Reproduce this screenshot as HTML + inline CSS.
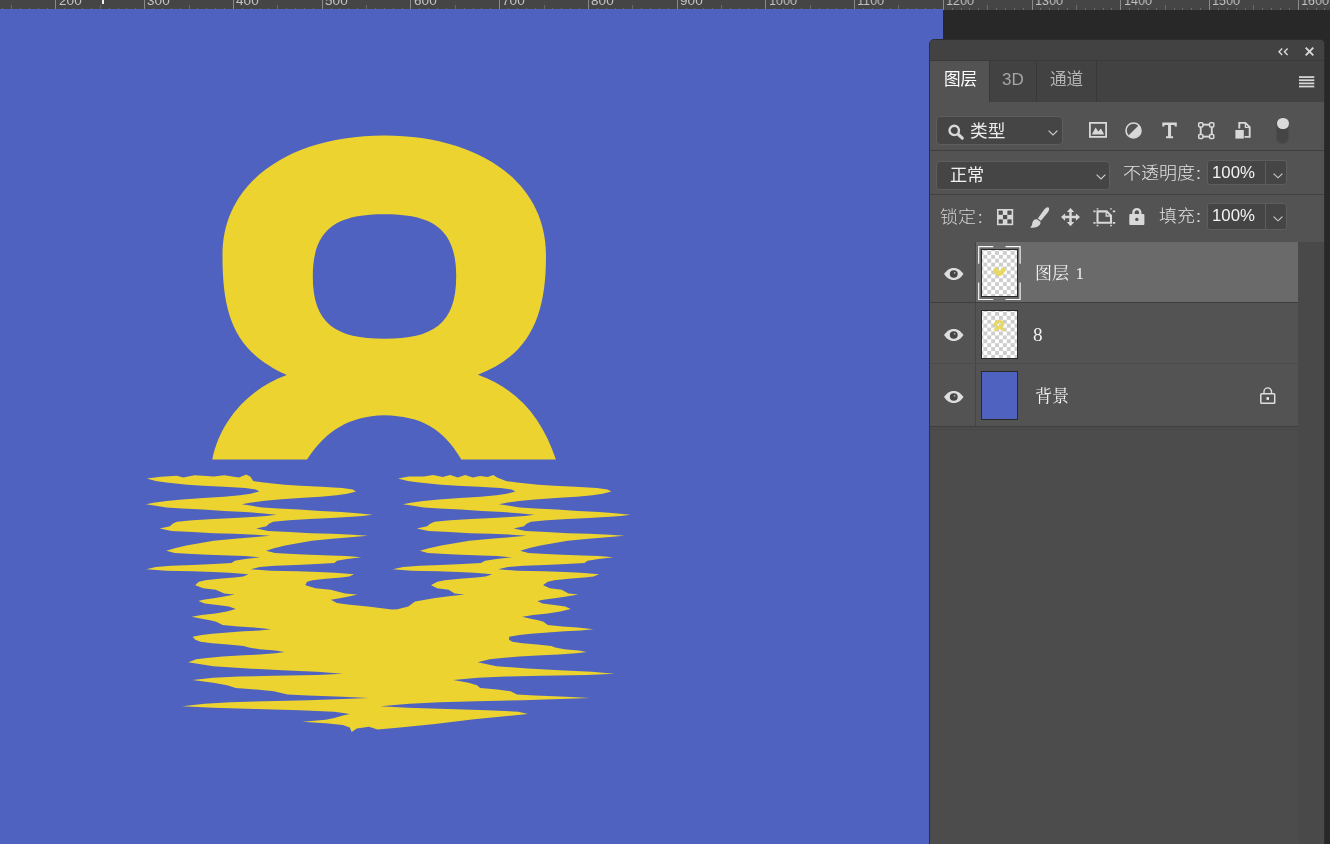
<!DOCTYPE html>
<html lang="zh-CN"><head><meta charset="utf-8"><title>Photoshop</title>
<style>
*{box-sizing:border-box;margin:0;padding:0}
html,body{width:1330px;height:844px;overflow:hidden;background:#282828;font-family:"Liberation Sans","Noto Sans CJK SC",sans-serif;}
#root{position:relative;width:1330px;height:844px;overflow:hidden;background:#282828}
.abs{position:absolute}
#canvas{left:0;top:9.1px;width:943px;height:835px;background:#4f62c0}
#ruler{left:0;top:0;width:1330px;height:9.8px;background:#454545;overflow:hidden}
#ruler span{will-change:transform;position:absolute;top:-5.9px;font-size:13.5px;line-height:14px;color:#c2c2c2;letter-spacing:0.1px}
#ruler i{position:absolute;display:block;width:1px;background:#8a8a8a}
#panel{left:929px;top:39px;width:395.5px;height:810px;background:#535353;border:1px solid #2e2e2e;border-radius:5px 5px 0 0;overflow:hidden}
.t{position:absolute;white-space:nowrap;line-height:1;will-change:transform;transform-origin:0 50%}
</style></head>
<body><div id="root">
<div id="ruler" class="abs"><i style="left:-33.3px;top:0;height:10px"></i><i style="left:-24.5px;top:8.0px;height:1.8px;background:#6a6a6a"></i><i style="left:-15.6px;top:8.0px;height:1.8px;background:#6a6a6a"></i><i style="left:-6.7px;top:8.0px;height:1.8px;background:#6a6a6a"></i><i style="left:2.2px;top:8.0px;height:1.8px;background:#6a6a6a"></i><i style="left:11.0px;top:5.2px;height:4.6px;background:#6a6a6a"></i><i style="left:19.9px;top:8.0px;height:1.8px;background:#6a6a6a"></i><i style="left:28.8px;top:8.0px;height:1.8px;background:#6a6a6a"></i><i style="left:37.7px;top:8.0px;height:1.8px;background:#6a6a6a"></i><i style="left:46.5px;top:8.0px;height:1.8px;background:#6a6a6a"></i><i style="left:55.4px;top:0;height:10px"></i><span style="left:58.6px;">200</span><i style="left:64.3px;top:8.0px;height:1.8px;background:#6a6a6a"></i><i style="left:73.1px;top:8.0px;height:1.8px;background:#6a6a6a"></i><i style="left:82.0px;top:8.0px;height:1.8px;background:#6a6a6a"></i><i style="left:90.9px;top:8.0px;height:1.8px;background:#6a6a6a"></i><i style="left:99.8px;top:5.2px;height:4.6px;background:#6a6a6a"></i><i style="left:108.6px;top:8.0px;height:1.8px;background:#6a6a6a"></i><i style="left:117.5px;top:8.0px;height:1.8px;background:#6a6a6a"></i><i style="left:126.4px;top:8.0px;height:1.8px;background:#6a6a6a"></i><i style="left:135.3px;top:8.0px;height:1.8px;background:#6a6a6a"></i><i style="left:144.1px;top:0;height:10px"></i><span style="left:147.3px;">300</span><i style="left:153.0px;top:8.0px;height:1.8px;background:#6a6a6a"></i><i style="left:161.9px;top:8.0px;height:1.8px;background:#6a6a6a"></i><i style="left:170.8px;top:8.0px;height:1.8px;background:#6a6a6a"></i><i style="left:179.6px;top:8.0px;height:1.8px;background:#6a6a6a"></i><i style="left:188.5px;top:5.2px;height:4.6px;background:#6a6a6a"></i><i style="left:197.4px;top:8.0px;height:1.8px;background:#6a6a6a"></i><i style="left:206.3px;top:8.0px;height:1.8px;background:#6a6a6a"></i><i style="left:215.1px;top:8.0px;height:1.8px;background:#6a6a6a"></i><i style="left:224.0px;top:8.0px;height:1.8px;background:#6a6a6a"></i><i style="left:232.9px;top:0;height:10px"></i><span style="left:236.1px;">400</span><i style="left:241.8px;top:8.0px;height:1.8px;background:#6a6a6a"></i><i style="left:250.6px;top:8.0px;height:1.8px;background:#6a6a6a"></i><i style="left:259.5px;top:8.0px;height:1.8px;background:#6a6a6a"></i><i style="left:268.4px;top:8.0px;height:1.8px;background:#6a6a6a"></i><i style="left:277.2px;top:5.2px;height:4.6px;background:#6a6a6a"></i><i style="left:286.1px;top:8.0px;height:1.8px;background:#6a6a6a"></i><i style="left:295.0px;top:8.0px;height:1.8px;background:#6a6a6a"></i><i style="left:303.9px;top:8.0px;height:1.8px;background:#6a6a6a"></i><i style="left:312.7px;top:8.0px;height:1.8px;background:#6a6a6a"></i><i style="left:321.6px;top:0;height:10px"></i><span style="left:324.8px;">500</span><i style="left:330.5px;top:8.0px;height:1.8px;background:#6a6a6a"></i><i style="left:339.4px;top:8.0px;height:1.8px;background:#6a6a6a"></i><i style="left:348.2px;top:8.0px;height:1.8px;background:#6a6a6a"></i><i style="left:357.1px;top:8.0px;height:1.8px;background:#6a6a6a"></i><i style="left:366.0px;top:5.2px;height:4.6px;background:#6a6a6a"></i><i style="left:374.9px;top:8.0px;height:1.8px;background:#6a6a6a"></i><i style="left:383.7px;top:8.0px;height:1.8px;background:#6a6a6a"></i><i style="left:392.6px;top:8.0px;height:1.8px;background:#6a6a6a"></i><i style="left:401.5px;top:8.0px;height:1.8px;background:#6a6a6a"></i><i style="left:410.4px;top:0;height:10px"></i><span style="left:413.6px;">600</span><i style="left:419.2px;top:8.0px;height:1.8px;background:#6a6a6a"></i><i style="left:428.1px;top:8.0px;height:1.8px;background:#6a6a6a"></i><i style="left:437.0px;top:8.0px;height:1.8px;background:#6a6a6a"></i><i style="left:445.9px;top:8.0px;height:1.8px;background:#6a6a6a"></i><i style="left:454.7px;top:5.2px;height:4.6px;background:#6a6a6a"></i><i style="left:463.6px;top:8.0px;height:1.8px;background:#6a6a6a"></i><i style="left:472.5px;top:8.0px;height:1.8px;background:#6a6a6a"></i><i style="left:481.4px;top:8.0px;height:1.8px;background:#6a6a6a"></i><i style="left:490.2px;top:8.0px;height:1.8px;background:#6a6a6a"></i><i style="left:499.1px;top:0;height:10px"></i><span style="left:502.3px;">700</span><i style="left:508.0px;top:8.0px;height:1.8px;background:#6a6a6a"></i><i style="left:516.8px;top:8.0px;height:1.8px;background:#6a6a6a"></i><i style="left:525.7px;top:8.0px;height:1.8px;background:#6a6a6a"></i><i style="left:534.6px;top:8.0px;height:1.8px;background:#6a6a6a"></i><i style="left:543.5px;top:5.2px;height:4.6px;background:#6a6a6a"></i><i style="left:552.3px;top:8.0px;height:1.8px;background:#6a6a6a"></i><i style="left:561.2px;top:8.0px;height:1.8px;background:#6a6a6a"></i><i style="left:570.1px;top:8.0px;height:1.8px;background:#6a6a6a"></i><i style="left:579.0px;top:8.0px;height:1.8px;background:#6a6a6a"></i><i style="left:587.8px;top:0;height:10px"></i><span style="left:591.0px;">800</span><i style="left:596.7px;top:8.0px;height:1.8px;background:#6a6a6a"></i><i style="left:605.6px;top:8.0px;height:1.8px;background:#6a6a6a"></i><i style="left:614.5px;top:8.0px;height:1.8px;background:#6a6a6a"></i><i style="left:623.3px;top:8.0px;height:1.8px;background:#6a6a6a"></i><i style="left:632.2px;top:5.2px;height:4.6px;background:#6a6a6a"></i><i style="left:641.1px;top:8.0px;height:1.8px;background:#6a6a6a"></i><i style="left:650.0px;top:8.0px;height:1.8px;background:#6a6a6a"></i><i style="left:658.8px;top:8.0px;height:1.8px;background:#6a6a6a"></i><i style="left:667.7px;top:8.0px;height:1.8px;background:#6a6a6a"></i><i style="left:676.6px;top:0;height:10px"></i><span style="left:679.8px;">900</span><i style="left:685.5px;top:8.0px;height:1.8px;background:#6a6a6a"></i><i style="left:694.3px;top:8.0px;height:1.8px;background:#6a6a6a"></i><i style="left:703.2px;top:8.0px;height:1.8px;background:#6a6a6a"></i><i style="left:712.1px;top:8.0px;height:1.8px;background:#6a6a6a"></i><i style="left:720.9px;top:5.2px;height:4.6px;background:#6a6a6a"></i><i style="left:729.8px;top:8.0px;height:1.8px;background:#6a6a6a"></i><i style="left:738.7px;top:8.0px;height:1.8px;background:#6a6a6a"></i><i style="left:747.6px;top:8.0px;height:1.8px;background:#6a6a6a"></i><i style="left:756.4px;top:8.0px;height:1.8px;background:#6a6a6a"></i><i style="left:765.3px;top:0;height:10px"></i><span style="left:768.5px;transform:scaleX(0.925);transform-origin:0 50%;">1000</span><i style="left:774.2px;top:8.0px;height:1.8px;background:#6a6a6a"></i><i style="left:783.1px;top:8.0px;height:1.8px;background:#6a6a6a"></i><i style="left:791.9px;top:8.0px;height:1.8px;background:#6a6a6a"></i><i style="left:800.8px;top:8.0px;height:1.8px;background:#6a6a6a"></i><i style="left:809.7px;top:5.2px;height:4.6px;background:#6a6a6a"></i><i style="left:818.6px;top:8.0px;height:1.8px;background:#6a6a6a"></i><i style="left:827.4px;top:8.0px;height:1.8px;background:#6a6a6a"></i><i style="left:836.3px;top:8.0px;height:1.8px;background:#6a6a6a"></i><i style="left:845.2px;top:8.0px;height:1.8px;background:#6a6a6a"></i><i style="left:854.1px;top:0;height:10px"></i><span style="left:857.3px;transform:scaleX(0.925);transform-origin:0 50%;">1100</span><i style="left:862.9px;top:8.0px;height:1.8px;background:#6a6a6a"></i><i style="left:871.8px;top:8.0px;height:1.8px;background:#6a6a6a"></i><i style="left:880.7px;top:8.0px;height:1.8px;background:#6a6a6a"></i><i style="left:889.6px;top:8.0px;height:1.8px;background:#6a6a6a"></i><i style="left:898.4px;top:5.2px;height:4.6px;background:#6a6a6a"></i><i style="left:907.3px;top:8.0px;height:1.8px;background:#6a6a6a"></i><i style="left:916.2px;top:8.0px;height:1.8px;background:#6a6a6a"></i><i style="left:925.1px;top:8.0px;height:1.8px;background:#6a6a6a"></i><i style="left:933.9px;top:8.0px;height:1.8px;background:#6a6a6a"></i><i style="left:942.8px;top:0;height:10px"></i><span style="left:946.0px;transform:scaleX(0.925);transform-origin:0 50%;">1200</span><i style="left:951.7px;top:8.0px;height:1.8px;background:#6a6a6a"></i><i style="left:960.5px;top:8.0px;height:1.8px;background:#6a6a6a"></i><i style="left:969.4px;top:8.0px;height:1.8px;background:#6a6a6a"></i><i style="left:978.3px;top:8.0px;height:1.8px;background:#6a6a6a"></i><i style="left:987.2px;top:5.2px;height:4.6px;background:#6a6a6a"></i><i style="left:996.0px;top:8.0px;height:1.8px;background:#6a6a6a"></i><i style="left:1004.9px;top:8.0px;height:1.8px;background:#6a6a6a"></i><i style="left:1013.8px;top:8.0px;height:1.8px;background:#6a6a6a"></i><i style="left:1022.7px;top:8.0px;height:1.8px;background:#6a6a6a"></i><i style="left:1031.5px;top:0;height:10px"></i><span style="left:1034.7px;transform:scaleX(0.925);transform-origin:0 50%;">1300</span><i style="left:1040.4px;top:8.0px;height:1.8px;background:#6a6a6a"></i><i style="left:1049.3px;top:8.0px;height:1.8px;background:#6a6a6a"></i><i style="left:1058.2px;top:8.0px;height:1.8px;background:#6a6a6a"></i><i style="left:1067.0px;top:8.0px;height:1.8px;background:#6a6a6a"></i><i style="left:1075.9px;top:5.2px;height:4.6px;background:#6a6a6a"></i><i style="left:1084.8px;top:8.0px;height:1.8px;background:#6a6a6a"></i><i style="left:1093.7px;top:8.0px;height:1.8px;background:#6a6a6a"></i><i style="left:1102.5px;top:8.0px;height:1.8px;background:#6a6a6a"></i><i style="left:1111.4px;top:8.0px;height:1.8px;background:#6a6a6a"></i><i style="left:1120.3px;top:0;height:10px"></i><span style="left:1123.5px;transform:scaleX(0.925);transform-origin:0 50%;">1400</span><i style="left:1129.2px;top:8.0px;height:1.8px;background:#6a6a6a"></i><i style="left:1138.0px;top:8.0px;height:1.8px;background:#6a6a6a"></i><i style="left:1146.9px;top:8.0px;height:1.8px;background:#6a6a6a"></i><i style="left:1155.8px;top:8.0px;height:1.8px;background:#6a6a6a"></i><i style="left:1164.6px;top:5.2px;height:4.6px;background:#6a6a6a"></i><i style="left:1173.5px;top:8.0px;height:1.8px;background:#6a6a6a"></i><i style="left:1182.4px;top:8.0px;height:1.8px;background:#6a6a6a"></i><i style="left:1191.3px;top:8.0px;height:1.8px;background:#6a6a6a"></i><i style="left:1200.1px;top:8.0px;height:1.8px;background:#6a6a6a"></i><i style="left:1209.0px;top:0;height:10px"></i><span style="left:1212.2px;transform:scaleX(0.925);transform-origin:0 50%;">1500</span><i style="left:1217.9px;top:8.0px;height:1.8px;background:#6a6a6a"></i><i style="left:1226.8px;top:8.0px;height:1.8px;background:#6a6a6a"></i><i style="left:1235.6px;top:8.0px;height:1.8px;background:#6a6a6a"></i><i style="left:1244.5px;top:8.0px;height:1.8px;background:#6a6a6a"></i><i style="left:1253.4px;top:5.2px;height:4.6px;background:#6a6a6a"></i><i style="left:1262.3px;top:8.0px;height:1.8px;background:#6a6a6a"></i><i style="left:1271.1px;top:8.0px;height:1.8px;background:#6a6a6a"></i><i style="left:1280.0px;top:8.0px;height:1.8px;background:#6a6a6a"></i><i style="left:1288.9px;top:8.0px;height:1.8px;background:#6a6a6a"></i><i style="left:1297.8px;top:0;height:10px"></i><span style="left:1301.0px;transform:scaleX(0.925);transform-origin:0 50%;">1600</span><i style="left:1306.6px;top:8.0px;height:1.8px;background:#6a6a6a"></i><i style="left:1315.5px;top:8.0px;height:1.8px;background:#6a6a6a"></i><i style="left:1324.4px;top:8.0px;height:1.8px;background:#6a6a6a"></i><i style="left:1333.3px;top:8.0px;height:1.8px;background:#6a6a6a"></i><i style="left:1342.1px;top:5.2px;height:4.6px;background:#6a6a6a"></i><i style="left:1351.0px;top:8.0px;height:1.8px;background:#6a6a6a"></i><i style="left:1359.9px;top:8.0px;height:1.8px;background:#6a6a6a"></i><i style="left:1368.8px;top:8.0px;height:1.8px;background:#6a6a6a"></i><i style="left:1377.6px;top:8.0px;height:1.8px;background:#6a6a6a"></i><i style="left:102px;top:0;width:2px;height:4px;background:#f0f0f0"></i></div>
<div id="canvas" class="abs"></div>
<svg class="abs" style="left:0;top:0" width="943" height="844" viewBox="0 0 943 844">
<path d="M286.8,375 C235.1,351.4 222.3,316.6 222.5,255 C222.5,180 292,135.4 384.3,135.4 C476.6,135.4 546,180 546,255 C546.2,315 530.5,354.5 477.9,374.8 C518.9,389.6 542.3,419 555.9,459.4 L461.3,459.4 C442.8,427.9 421.1,416.2 384.3,415.2 C348.7,416.4 326.3,430.3 307,459.4 L212.3,459.4 C220.4,419.9 249.2,388.6 286.8,375 Z M384.5,214.3 C336,214.3 312.8,229 312.8,276.5 C312.8,324 336,338.8 384.5,338.8 C433,338.8 456.2,324 456.2,276.5 C456.2,229 433,214.3 384.5,214.3 Z" fill="#ecd330" fill-rule="evenodd"/>
<path d="M146.8,478.6 L161.0,476.8 L176.8,475.8 L183.2,477.6 L194.7,475.3 L213.7,476.5 L224.2,475.3 L238.9,477.4 L246.3,474.4 L250.5,476.8 L253.2,481.1 L263.6,482.6 L284.5,484.7 L300.3,485.8 L321.3,486.8 L342.2,488.1 L352.7,489.5 L356.0,491.4 L347.2,493.7 L336.6,495.3 L320.7,496.8 L299.6,497.9 L278.4,499.5 L262.5,501.1 L249.8,502.8 L241.8,504.3 L251.8,505.8 L262.4,507.4 L278.2,508.4 L299.2,509.5 L320.3,511.1 L341.4,512.1 L357.2,513.2 L372.8,514.8 L362.5,516.1 L352.0,516.8 L331.0,517.9 L310.0,518.9 L288.9,520.3 L273.2,521.8 L269.0,523.7 L266.4,526.3 L256.2,528.5 L268.2,531.1 L289.4,532.1 L310.7,533.2 L331.8,533.7 L353.0,534.7 L367.9,535.8 L353.4,537.1 L332.5,538.7 L311.8,540.8 L296.4,543.4 L285.1,545.5 L274.0,548.2 L266.0,550.8 L275.0,552.9 L293.1,553.9 L309.1,554.8 L330.4,555.5 L346.3,556.1 L361.3,557.3 L347.0,559.0 L336.9,560.8 L334.3,562.9 L316.7,563.9 L295.9,565.0 L275.0,565.7 L259.6,567.1 L250.6,569.3 L271.0,570.8 L297.5,571.3 L318.7,572.1 L334.6,572.7 L354.0,574.3 L349.3,576.6 L341.1,577.6 L325.6,578.7 L312.4,580.3 L307.1,581.8 L305.6,584.5 L305.5,585.2 L315.4,588.2 L330.7,589.7 L345.2,593.4 L357.3,594.6 L348.8,596.6 L339.8,598.2 L330.9,599.7 L337.0,603.0 L347.4,604.6 L367.7,606.6 L392.0,609.6 L397.4,609.2 L408.3,606.5 L415.0,601.6 L435.3,598.0 L448.9,596.2 L464.7,594.6 L454.6,593.4 L448.6,589.7 L437.1,588.2 L431.1,585.2 L432.2,584.5 L437.3,581.8 L444.8,580.3 L459.7,578.7 L476.3,577.6 L485.5,576.6 L492.3,574.3 L474.1,572.7 L458.7,572.1 L438.0,571.3 L411.9,570.8 L392.7,569.3 L403.2,567.1 L419.6,565.7 L441.0,565.0 L462.5,563.9 L480.9,562.9 L485.0,560.8 L496.4,559.0 L511.9,557.3 L497.5,556.1 L481.8,555.5 L461.0,554.8 L445.4,553.9 L427.8,552.9 L419.9,550.8 L428.9,548.2 L441.2,545.5 L453.1,543.4 L469.2,540.8 L490.6,538.7 L511.8,537.1 L526.7,535.8 L512.2,534.7 L491.2,533.7 L470.3,533.2 L449.4,532.1 L428.4,531.1 L416.8,528.5 L427.2,526.3 L430.1,523.7 L434.4,521.8 L450.3,520.3 L471.4,518.9 L492.5,517.9 L513.7,516.8 L524.2,516.1 L534.6,514.8 L518.9,513.2 L503.0,512.1 L481.9,511.1 L460.7,509.5 L439.6,508.4 L423.7,507.4 L413.1,505.8 L402.9,504.3 L410.7,502.8 L423.2,501.1 L438.9,499.5 L459.8,497.9 L480.8,496.8 L496.4,495.3 L506.8,493.7 L515.4,491.4 L511.6,489.5 L500.5,488.1 L478.9,486.8 L457.5,485.8 L441.2,484.7 L419.1,482.6 L407.8,481.1 L398.0,478.6 L408.8,476.5 L423.8,476.5 L433.2,475.1 L442.6,477.0 L450.2,475.1 L457.7,477.4 L465.2,475.1 L472.7,477.4 L480.2,475.9 L487.7,477.0 L493.4,475.1 L497.1,477.4 L506.1,481.1 L516.9,482.6 L538.3,484.7 L554.3,485.8 L575.5,486.8 L596.8,488.1 L607.5,489.5 L611.3,491.4 L602.8,493.7 L592.4,495.3 L576.7,496.8 L555.7,497.9 L534.8,499.5 L519.2,501.1 L506.7,502.8 L498.9,504.3 L509.0,505.8 L519.7,507.4 L535.6,508.4 L556.7,509.5 L577.9,511.1 L599.0,512.1 L614.9,513.2 L630.6,514.8 L620.3,516.1 L609.8,516.8 L588.7,517.9 L567.7,518.9 L546.6,520.3 L530.8,521.8 L526.6,523.7 L524.0,526.3 L513.7,528.5 L525.6,531.1 L546.6,532.1 L567.7,533.2 L588.7,533.7 L609.8,534.7 L624.5,535.8 L609.8,537.1 L588.7,538.7 L567.7,540.8 L551.9,543.4 L540.3,545.5 L528.7,548.2 L520.2,550.8 L528.4,552.9 L546.2,553.9 L561.9,554.8 L582.9,555.5 L598.7,556.1 L613.3,557.3 L598.4,559.0 L587.7,560.8 L584.3,562.9 L566.3,563.9 L545.1,565.0 L523.9,565.7 L507.9,567.1 L498.0,569.3 L517.7,570.8 L543.9,571.3 L564.8,572.1 L580.4,572.7 L599.1,574.3 L593.3,576.6 L584.6,577.6 L568.5,578.7 L554.4,580.3 L547.7,581.8 L543.9,584.5 L543.2,585.2 L549.8,588.2 L561.7,589.7 L568.5,593.4 L578.3,594.6 L566.4,596.6 L554.7,598.2 L543.1,599.7 L537.4,601.0 L542.5,603.4 L554.4,605.0 L565.2,606.6 L570.7,609.1 L560.3,611.6 L547.7,613.4 L533.2,615.0 L522.1,616.8 L530.8,618.7 L538.2,620.3 L543.5,621.8 L547.7,625.0 L562.5,626.6 L577.6,627.6 L593.4,629.2 L580.7,630.6 L564.4,631.3 L547.8,632.4 L530.9,633.7 L519.4,635.0 L509.1,636.8 L509.1,639.7 L512.3,641.8 L522.6,643.2 L537.2,644.5 L551.4,646.1 L555.2,647.6 L564.2,649.2 L578.6,650.6 L586.7,652.1 L575.8,653.2 L558.5,654.5 L541.8,655.2 L519.1,656.6 L501.7,657.9 L489.7,659.2 L477.7,662.3 L496.5,666.2 L527.5,668.5 L559.4,670.2 L591.5,671.8 L614.4,673.7 L586.5,674.9 L541.8,675.8 L505.8,676.6 L477.9,677.8 L453.3,680.1 L468.6,682.7 L477.0,685.3 L480.2,687.9 L497.3,689.6 L510.6,691.3 L517.0,694.4 L534.8,695.6 L566.5,696.8 L589.8,697.9 L560.5,699.1 L522.6,700.3 L476.5,701.3 L439.6,702.2 L409.4,703.8 L380.3,706.2 L407.4,707.7 L447.5,709.0 L487.2,710.3 L518.2,711.7 L527.9,714.0 L474.0,719.2 L435.0,724.0 L400.0,727.6 L377.5,729.4 L368.9,726.8 L356.8,728.5 L351.6,732.0 L349.8,727.6 L342.9,725.0 L325.6,723.3 L302.3,721.7 L325.6,719.8 L334.3,718.1 L342.9,715.5 L349.8,714.0 L334.3,711.7 L299.7,710.3 L256.5,709.0 L213.2,707.7 L182.1,706.2 L204.6,703.8 L230.5,702.2 L265.1,701.3 L308.3,700.3 L342.9,699.1 L368.9,697.9 L342.9,696.8 L308.3,695.6 L287.6,694.4 L273.8,691.3 L256.5,689.6 L235.7,687.9 L227.1,685.3 L213.2,682.7 L192.5,680.1 L213.2,677.8 L239.2,676.6 L273.8,675.8 L317.0,674.9 L342.9,673.7 L317.0,671.8 L282.4,670.2 L247.8,668.5 L213.2,666.2 L188.2,662.3 L196.3,659.2 L206.8,657.9 L222.6,656.6 L243.7,655.2 L259.5,654.5 L275.3,653.2 L284.7,652.1 L275.3,650.6 L259.5,649.2 L248.9,647.6 L243.7,646.1 L227.9,644.5 L212.1,643.2 L200.5,641.8 L195.3,639.7 L192.6,636.8 L201.6,635.0 L212.1,633.7 L227.9,632.4 L243.7,631.3 L259.5,630.6 L271.1,629.2 L254.2,627.6 L238.4,626.6 L222.6,625.0 L216.3,621.8 L210.0,620.3 L201.6,618.7 L191.6,616.8 L201.6,615.0 L215.3,613.4 L226.8,611.6 L235.8,609.1 L228.9,606.6 L217.4,605.0 L204.7,603.4 L198.4,601.0 L203.2,599.7 L213.7,598.2 L224.2,596.6 L234.7,594.6 L224.2,593.4 L215.8,589.7 L203.2,588.2 L195.3,585.2 L195.8,584.5 L198.9,581.8 L205.3,580.3 L218.9,578.7 L234.7,577.6 L243.2,576.6 L248.4,574.3 L229.5,572.7 L213.7,572.1 L192.6,571.3 L166.3,570.8 L146.3,569.3 L155.8,567.1 L171.6,565.7 L192.6,565.0 L213.7,563.9 L231.6,562.9 L234.7,560.8 L245.3,559.0 L260.0,557.3 L245.3,556.1 L229.5,555.5 L208.4,554.8 L192.6,553.9 L174.7,552.9 L166.3,550.8 L174.7,548.2 L186.3,545.5 L197.9,543.4 L213.7,540.8 L234.7,538.7 L255.8,537.1 L270.5,535.8 L255.8,534.7 L234.7,533.7 L213.7,533.2 L192.6,532.1 L171.6,531.1 L159.7,528.5 L170.0,526.3 L172.6,523.7 L176.8,521.8 L192.6,520.3 L213.7,518.9 L234.7,517.9 L255.8,516.8 L266.3,516.1 L276.6,514.8 L261.1,513.2 L245.3,512.1 L224.2,511.1 L203.2,509.5 L182.1,508.4 L166.3,507.4 L155.8,505.8 L145.8,504.3 L153.7,502.8 L166.3,501.1 L182.1,499.5 L203.2,497.9 L224.2,496.8 L240.0,495.3 L250.5,493.7 L259.3,491.4 L255.8,489.5 L245.3,488.1 L224.2,486.8 L203.2,485.8 L187.4,484.7 L166.3,482.6 L155.8,481.1 Z" fill="#ecd330"/>
</svg>
<div id="panel" class="abs"><div style="position:absolute;left:0.0px;top:0.0px;width:396.0px;height:62.0px;background:#424242"></div>
<div style="position:absolute;left:0.0px;top:19.5px;width:396.0px;height:1.0px;background:#3a3a3a"></div>
<svg style="position:absolute;left:348.0px;top:7.7px;overflow:visible;" width="11.0" height="7.6" viewBox="0 0 11 7.6" preserveAspectRatio="none"><path d="M4.2,0.5 L1,3.8 L4.2,7.1 M9.6,0.5 L6.4,3.8 L9.6,7.1" fill="none" stroke="#d8d8d8" stroke-width="1.4"/></svg>
<svg style="position:absolute;left:375.0px;top:7.0px;overflow:visible;" width="9.0" height="9.0" viewBox="0 0 9 9" preserveAspectRatio="none"><path d="M0.7,0.7 L8.3,8.3 M8.3,0.7 L0.7,8.3" fill="none" stroke="#d8d8d8" stroke-width="1.9"/></svg>
<div style="position:absolute;left:0.0px;top:20.5px;width:59.7px;height:41.5px;background:#535353"></div>
<div style="position:absolute;left:59.2px;top:20.5px;width:1.0px;height:41.5px;background:#383838"></div>
<div style="position:absolute;left:105.8px;top:20.5px;width:1.0px;height:41.5px;background:#383838"></div>
<div style="position:absolute;left:165.9px;top:20.5px;width:1.0px;height:41.5px;background:#383838"></div>
<div class="t" style="left:14.3px;top:32.0px;font-size:16.6px;color:#ffffff;">图层</div>
<div class="t" style="left:72.2px;top:30.6px;font-size:17px;color:#a6a6a6;">3D</div>
<div class="t" style="left:120.4px;top:32.4px;font-size:16.6px;color:#b4b4b4;">通道</div>
<svg style="position:absolute;left:369.0px;top:35.6px;overflow:visible;" width="15.3" height="12.0" viewBox="0 0 15.3 12" preserveAspectRatio="none"><rect x="0" y="0.2" width="15.3" height="1.75" fill="#d8d8d8"/><rect x="0" y="3.35" width="15.3" height="1.75" fill="#d8d8d8"/><rect x="0" y="6.5" width="15.3" height="1.75" fill="#d8d8d8"/><rect x="0" y="9.65" width="15.3" height="1.75" fill="#d8d8d8"/></svg>
<div style="position:absolute;left:6.2px;top:76.4px;width:126.4px;height:28.6px;background:#454545;border:1px solid #5e5e5e;border-radius:4px"></div>
<svg style="position:absolute;left:17.0px;top:83.0px;overflow:visible;" width="18.0" height="18.0" viewBox="0 0 18 18" preserveAspectRatio="none"><circle cx="7.25" cy="7.4" r="4.7" fill="none" stroke="#d8d8d8" stroke-width="2.4"/><path d="M11.3,11.5 L15.3,15.2" stroke="#d8d8d8" stroke-width="3.1" stroke-linecap="round"/></svg>
<div class="t" style="left:39.8px;top:84.1px;font-size:16.8px;color:#ececec;transform:scaleX(1.055);">类型</div>
<svg style="position:absolute;left:118.3px;top:89.5px;overflow:visible;" width="10.0" height="6.0" viewBox="0 0 10 6" preserveAspectRatio="none"><path d="M0.6,0.6 L5,5 L9.4,0.6" fill="none" stroke="#cccccc" stroke-width="1.15"/></svg>
<svg style="position:absolute;left:159.0px;top:82.2px;overflow:visible;" width="18.0" height="15.8" viewBox="0 0 18 15.8" preserveAspectRatio="none"><rect x="0.9" y="0.9" width="16.2" height="14" fill="none" stroke="#d8d8d8" stroke-width="1.8"/><path d="M2.8,12.4 L6.6,5.6 L9.3,9.6 L11.9,6.4 L15.2,12.4 Z" fill="#d8d8d8"/></svg>
<svg style="position:absolute;left:195.0px;top:81.8px;overflow:visible;" width="17.0" height="17.0" viewBox="0 0 17 17" preserveAspectRatio="none"><circle cx="8.5" cy="8.5" r="7.5" fill="none" stroke="#d8d8d8" stroke-width="1.6"/><path d="M13.8,3.2 A7.5,7.5 0 0 1 3.2,13.8 Z" fill="#d8d8d8"/></svg>
<svg style="position:absolute;left:232.3px;top:82.2px;overflow:visible;" width="15.1" height="16.6" viewBox="0 0 15 16.6" preserveAspectRatio="none"><path d="M0.3,0.5 H14.7 V4.6 H12.6 V2.9 H9 V14.2 H11 V16.2 H4 V14.2 H6 V2.9 H2.4 V4.6 H0.3 Z" fill="#d8d8d8"/></svg>
<svg style="position:absolute;left:267.7px;top:81.5px;overflow:visible;" width="16.5" height="17.3" viewBox="0 0 16.5 17.3" preserveAspectRatio="none"><rect x="2.7" y="2.7" width="11.1" height="11.9" fill="none" stroke="#d8d8d8" stroke-width="1.9"/><rect x="0.7" y="0.7" width="4.2" height="4.2" rx="1" fill="#535353" stroke="#d8d8d8" stroke-width="1.5"/><rect x="0.7" y="12.4" width="4.2" height="4.2" rx="1" fill="#535353" stroke="#d8d8d8" stroke-width="1.5"/><rect x="11.6" y="0.7" width="4.2" height="4.2" rx="1" fill="#535353" stroke="#d8d8d8" stroke-width="1.5"/><rect x="11.6" y="12.4" width="4.2" height="4.2" rx="1" fill="#535353" stroke="#d8d8d8" stroke-width="1.5"/></svg>
<svg style="position:absolute;left:305.3px;top:81.5px;overflow:visible;" width="15.7" height="17.3" viewBox="0 0 15.7 17.3" preserveAspectRatio="none"><path d="M4.3,6.5 V0.9 H10.4 L14.7,5.2 V14.9 H9.5" fill="none" stroke="#d8d8d8" stroke-width="1.9"/><path d="M10.4,0.8 V5.3 H14.9" fill="none" stroke="#d8d8d8" stroke-width="1.3"/><rect x="0.4" y="8" width="8.4" height="8.6" fill="#d8d8d8"/></svg>
<div style="position:absolute;left:347.2px;top:78.5px;width:11.0px;height:24.1px;background:#454545;border-radius:6px;box-shadow:0 0 0 1.2px #4c4c4c"></div>
<div style="position:absolute;left:346.8px;top:77.6px;width:11.8px;height:11.8px;background:#dadada;border-radius:50%"></div>
<div style="position:absolute;left:0.0px;top:110.0px;width:396.0px;height:1.4px;background:#3f3f3f"></div>
<div style="position:absolute;left:6.2px;top:120.5px;width:173.8px;height:29.1px;background:#454545;border:1px solid #5e5e5e;border-radius:4px"></div>
<div class="t" style="left:19.6px;top:127.8px;font-size:16.8px;color:#f0f0f0;transform:scaleX(1.02);">正常</div>
<svg style="position:absolute;left:166.4px;top:134.2px;overflow:visible;" width="10.0" height="6.0" viewBox="0 0 10 6" preserveAspectRatio="none"><path d="M0.6,0.6 L5,5 L9.4,0.6" fill="none" stroke="#cccccc" stroke-width="1.15"/></svg>
<div class="t" style="left:193.0px;top:126.1px;font-size:16.6px;color:#e2e2e2;transform:scaleX(1.085);font-weight:300;">不透明度<span style="margin-left:1px">:</span></div>
<div style="position:absolute;left:277.0px;top:120.4px;width:80.4px;height:25.1px;background:#454545;border:1px solid #5e5e5e;border-radius:3px"></div>
<div style="position:absolute;left:335.0px;top:121.8px;width:1.0px;height:23.2px;background:#5e5e5e"></div>
<div class="t" style="left:281.5px;top:124.7px;font-size:16.8px;color:#f4f4f4;">100%</div>
<svg style="position:absolute;left:342.5px;top:132.8px;overflow:visible;" width="10.0" height="5.6" viewBox="0 0 10 5.6" preserveAspectRatio="none"><path d="M0.6,0.6 L5,4.8 L9.4,0.6" fill="none" stroke="#cccccc" stroke-width="1.15"/></svg>
<div style="position:absolute;left:0.0px;top:153.8px;width:396.0px;height:1.2px;background:#424242"></div>
<div class="t" style="left:9.8px;top:169.8px;font-size:16.6px;color:#d2d2d2;transform:scaleX(1.085);font-weight:300;">锁定<span style="margin-left:1.5px">:</span></div>
<svg style="position:absolute;left:66.8px;top:168.6px;overflow:visible;" width="16.2" height="16.2" viewBox="0 0 16.2 16.2" preserveAspectRatio="none"><rect x="0" y="0" width="16.2" height="16.2" fill="#d8d8d8"/><rect x="1.60" y="1.60" width="4.2" height="4.2" fill="#4e4e4e"/><rect x="10.40" y="1.60" width="4.2" height="4.2" fill="#4e4e4e"/><rect x="6.00" y="6.00" width="4.2" height="4.2" fill="#4e4e4e"/><rect x="1.60" y="10.40" width="4.2" height="4.2" fill="#4e4e4e"/><rect x="10.40" y="10.40" width="4.2" height="4.2" fill="#4e4e4e"/></svg>
<svg style="position:absolute;left:99.5px;top:166.7px;overflow:visible;" width="19.5" height="21.0" viewBox="0 0 19.5 21" preserveAspectRatio="none"><path d="M18.5,0.5 C17.2,-0.2 15.4,0.9 14.2,2.6 L7.8,11.4 L10.9,13.8 L17.9,5.2 C19.3,3.4 19.6,1.2 18.5,0.5 Z" fill="#d8d8d8"/><path d="M7,12.2 C4.2,11.8 2.6,13.8 2.3,16.2 C2.1,18.2 1.2,19.6 0.2,20.5 C3.8,21.1 8,20.2 9.8,17.8 C10.8,16.4 10.6,14.8 10.1,14.4 Z" fill="#d8d8d8"/></svg>
<svg style="position:absolute;left:131.0px;top:168.2px;overflow:visible;" width="19.0" height="18.2" viewBox="0 0 19 18.2" preserveAspectRatio="none"><path d="M9.5,0 L13.2,4.1 H10.75 V7.85 H14.9 V5.4 L19,9.1 L14.9,12.8 V10.35 H10.75 V14.1 H13.2 L9.5,18.2 L5.8,14.1 H8.25 V10.35 H4.1 V12.8 L0,9.1 L4.1,5.4 V7.85 H8.25 V4.1 H5.8 Z" fill="#d8d8d8"/></svg>
<svg style="position:absolute;left:162.7px;top:168.0px;overflow:visible;" width="22.5" height="18.4" viewBox="0 0 22.5 18.4" preserveAspectRatio="none"><path d="M4.5,3.4 H13.6 L18,7.6 V14.8 H4.5 Z" fill="none" stroke="#d8d8d8" stroke-width="2.1"/><path d="M13.2,3.4 V8 H18" fill="none" stroke="#d8d8d8" stroke-width="1.3"/><path d="M0.4,3.4 H2.6 M19.8,3.4 H22.2 M0.4,14.8 H2.6 M19.8,14.8 H22.2 M4.5,0.2 V1.6 M18,0.2 V1.6 M4.5,16.8 V18.2 M18,16.8 V18.2" stroke="#d8d8d8" stroke-width="1.7"/></svg>
<svg style="position:absolute;left:199.0px;top:167.9px;overflow:visible;" width="15.7" height="17.3" viewBox="0 0 15.7 17.3" preserveAspectRatio="none"><path d="M4.4,7 V4.6 A3.45,3.45 0 0 1 11.3,4.6 V7" fill="none" stroke="#d8d8d8" stroke-width="2.4"/><rect x="0.3" y="5.9" width="15.1" height="11.2" rx="1" fill="#d8d8d8"/><circle cx="7.85" cy="11.4" r="1.7" fill="#535353"/></svg>
<div class="t" style="left:229.4px;top:169.4px;font-size:16.6px;color:#e2e2e2;transform:scaleX(1.08);font-weight:300;">填充<span style="margin-left:1px">:</span></div>
<div style="position:absolute;left:277.0px;top:163.0px;width:80.4px;height:27.2px;background:#454545;border:1px solid #5e5e5e;border-radius:3px"></div>
<div style="position:absolute;left:335.0px;top:164.0px;width:1.0px;height:25.2px;background:#5e5e5e"></div>
<div class="t" style="left:281.5px;top:168.1px;font-size:16.8px;color:#f4f4f4;">100%</div>
<svg style="position:absolute;left:342.5px;top:176.2px;overflow:visible;" width="10.0" height="5.6" viewBox="0 0 10 5.6" preserveAspectRatio="none"><path d="M0.6,0.6 L5,4.8 L9.4,0.6" fill="none" stroke="#cccccc" stroke-width="1.15"/></svg>
<div style="position:absolute;left:0.0px;top:201.8px;width:396.0px;height:608.2px;background:#4c4c4c"></div>
<div style="position:absolute;left:367.6px;top:201.8px;width:28.4px;height:608.2px;background:#494949"></div>
<div style="position:absolute;left:0.0px;top:201.8px;width:367.6px;height:60.4px;background:#535353"></div>
<div style="position:absolute;left:45.9px;top:201.8px;width:321.7px;height:60.4px;background:#6a6a6a"></div>
<div style="position:absolute;left:0.0px;top:262.2px;width:367.6px;height:0.9px;background:#3e3e3e"></div>
<div style="position:absolute;left:44.9px;top:201.8px;width:1.0px;height:60.4px;background:#454545"></div>
<svg style="position:absolute;left:13.8px;top:227.6px;overflow:visible;" width="19.5" height="12.1" viewBox="0 0 20 13.2" preserveAspectRatio="none"><path d="M0,6.6 C3.4,1.6 6.6,0 10,0 C13.4,0 16.6,1.6 20,6.6 C16.6,11.6 13.4,13.2 10,13.2 C6.6,13.2 3.4,11.6 0,6.6 Z" fill="#dedede"/><circle cx="10" cy="6.6" r="4.05" fill="#454545"/><circle cx="10.9" cy="5.4" r="0.9" fill="#b0b0b0"/></svg>
<div style="position:absolute;left:51.1px;top:208.5px;width:37.4px;height:48.8px;border:1.7px solid #292929;background-color:#fff;background-image:conic-gradient(#cdcdcd 25%,#fff 0 50%,#cdcdcd 0 75%,#fff 0);background-size:7.8px 7.8px;background-position:1.4px 1.0px"></div>
<div class="t" style="left:105.2px;top:224.6px;font-size:17px;color:#f2f2f2;font-family:'Liberation Serif','Noto Serif CJK SC',serif;word-spacing:2.2px;">图层 1</div>
<div style="position:absolute;left:0.0px;top:263.1px;width:367.6px;height:60.4px;background:#535353"></div>
<div style="position:absolute;left:0.0px;top:323.5px;width:367.6px;height:0.9px;background:#3e3e3e"></div>
<div style="position:absolute;left:44.9px;top:263.1px;width:1.0px;height:60.4px;background:#454545"></div>
<svg style="position:absolute;left:13.8px;top:288.9px;overflow:visible;" width="19.5" height="12.1" viewBox="0 0 20 13.2" preserveAspectRatio="none"><path d="M0,6.6 C3.4,1.6 6.6,0 10,0 C13.4,0 16.6,1.6 20,6.6 C16.6,11.6 13.4,13.2 10,13.2 C6.6,13.2 3.4,11.6 0,6.6 Z" fill="#dedede"/><circle cx="10" cy="6.6" r="4.05" fill="#454545"/><circle cx="10.9" cy="5.4" r="0.9" fill="#b0b0b0"/></svg>
<div style="position:absolute;left:51.1px;top:269.8px;width:37.4px;height:48.8px;border:1.7px solid #292929;background-color:#fff;background-image:conic-gradient(#cdcdcd 25%,#fff 0 50%,#cdcdcd 0 75%,#fff 0);background-size:7.8px 7.8px;background-position:1.4px 1.0px"></div>
<div class="t" style="left:102.6px;top:284.9px;font-size:19.2px;color:#f2f2f2;font-family:'Liberation Serif','Noto Serif CJK SC',serif;">8</div>
<div style="position:absolute;left:0.0px;top:324.4px;width:367.6px;height:61.4px;background:#535353"></div>
<div style="position:absolute;left:0.0px;top:385.8px;width:367.6px;height:0.9px;background:#3e3e3e"></div>
<div style="position:absolute;left:44.9px;top:324.4px;width:1.0px;height:61.4px;background:#454545"></div>
<svg style="position:absolute;left:13.8px;top:350.7px;overflow:visible;" width="19.5" height="12.1" viewBox="0 0 20 13.2" preserveAspectRatio="none"><path d="M0,6.6 C3.4,1.6 6.6,0 10,0 C13.4,0 16.6,1.6 20,6.6 C16.6,11.6 13.4,13.2 10,13.2 C6.6,13.2 3.4,11.6 0,6.6 Z" fill="#dedede"/><circle cx="10" cy="6.6" r="4.05" fill="#454545"/><circle cx="10.9" cy="5.4" r="0.9" fill="#b0b0b0"/></svg>
<div style="position:absolute;left:51.1px;top:331.1px;width:37.4px;height:48.8px;background:#4f62c0;border:1.7px solid #292929"></div>
<div class="t" style="left:104.6px;top:347.7px;font-size:17px;color:#f2f2f2;font-family:'Liberation Serif','Noto Serif CJK SC',serif;word-spacing:2.2px;">背景</div>
<div style="position:absolute;left:0.0px;top:388.8px;width:367.6px;height:0.8px;background:#484848"></div>
<svg style="position:absolute;left:48.4px;top:205.8px;overflow:visible;" width="42.8" height="54.2" viewBox="0 0 42.8 54.2" preserveAspectRatio="none"><path d="M0.7,17.7 V0.7 H15.299999999999999 M27.5,0.7 H42.1 V17.7 M42.1,36.5 V53.5 H27.5 M15.299999999999999,53.5 H0.7 V36.5" fill="none" stroke="#f8f8f8" stroke-width="1.2"/></svg>
<svg style="position:absolute;left:62.6px;top:227.0px;overflow:visible;" width="12.6" height="9.6" viewBox="0 0 13.6 10.8" preserveAspectRatio="none"><path d="M0.2,1.6 L4.4,0.6 L5.2,3.4 L6.8,4.2 L8.4,3.4 L9.2,0.6 L13.4,1.6 L12.8,5.4 L10.6,8.8 L6.8,10.4 L3,8.8 L0.8,5.4 Z" fill="#e8d862" style="filter:blur(0.45px)"/></svg>
<svg style="position:absolute;left:63.6px;top:280.4px;overflow:visible;" width="10.4" height="10.4" viewBox="0 0 11.2 11.4" preserveAspectRatio="none"><path d="M5.6,0.2 C8.8,0.2 10.8,2 10.8,4.4 C10.8,6 10,7.2 8.8,8 C10,8.8 11,10 11.2,11.4 L8,11.4 C7.6,10.2 6.8,9.6 5.6,9.6 C4.4,9.6 3.6,10.2 3.2,11.4 L0,11.4 C0.2,10 1.2,8.8 2.4,8 C1.2,7.2 0.4,6 0.4,4.4 C0.4,2 2.4,0.2 5.6,0.2 Z M5.6,2.8 C4.2,2.8 3.4,3.6 3.4,4.9 C3.4,6.2 4.2,7 5.6,7 C7,7 7.8,6.2 7.8,4.9 C7.8,3.6 7,2.8 5.6,2.8 Z" fill="#e8d862" fill-rule="evenodd" stroke="#e8d862" stroke-width="0.8" style="filter:blur(0.45px)"/></svg>
<svg style="position:absolute;left:329.5px;top:347.0px;overflow:visible;" width="15.5" height="17.0" viewBox="0 0 15.5 17" preserveAspectRatio="none"><path d="M4,7 V4.6 A3.75,3.75 0 0 1 11.5,4.6 V7" fill="none" stroke="#dedede" stroke-width="1.4"/><rect x="0.8" y="6.8" width="13.9" height="9.4" rx="0.8" fill="none" stroke="#dedede" stroke-width="1.5"/><rect x="6.5" y="10.2" width="2.5" height="2.6" fill="#f2f2f2"/></svg></div>
</div></body></html>
